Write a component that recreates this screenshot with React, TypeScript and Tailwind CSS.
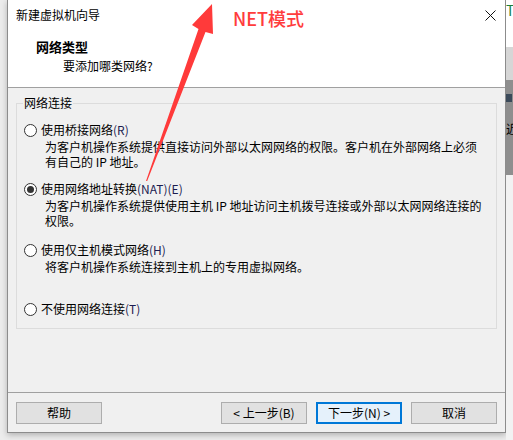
import React from "react";

const font = { fontFamily: '"Noto Sans CJK SC", "Microsoft YaHei", sans-serif' };

interface Option {
  label: string;
  hotkey: string;
  desc: string[];
  checked?: boolean;
  mt: string;
}

const options: Option[] = [
  {
    label: "使用桥接网络",
    hotkey: "(R)",
    desc: [
      "为客户机操作系统提供直接访问外部以太网网络的权限。客户机在外部网络上必须",
      "有自己的 IP 地址。",
    ],
    mt: "mt-[11px]",
  },
  {
    label: "使用网络地址转换",
    hotkey: "(NAT)(E)",
    desc: [
      "为客户机操作系统提供使用主机 IP 地址访问主机拨号连接或外部以太网网络连接的",
      "权限。",
    ],
    checked: true,
    mt: "mt-[12px]",
  },
  {
    label: "使用仅主机模式网络",
    hotkey: "(H)",
    desc: ["将客户机操作系统连接到主机上的专用虚拟网络。"],
    mt: "mt-[14px]",
  },
  {
    label: "不使用网络连接",
    hotkey: "(T)",
    desc: [],
    mt: "mt-[27px]",
  },
];

const Radio = ({ checked }: { checked?: boolean }) => (
  <span className="w-[13px] h-[13px] rounded-full border border-[#333333] bg-white flex items-center justify-center shrink-0">
    {checked && <span className="w-[7px] h-[7px] rounded-full bg-[#333333]" />}
  </span>
);

const Button = ({ children, primary }: { children: React.ReactNode; primary?: boolean }) => (
  <button
    className={
      primary
        ? "w-[86px] h-[22px] bg-[#e5f1fb] border-2 border-[#0078d7] text-[12px] leading-[16px] text-black"
        : "w-[86px] h-[22px] bg-[#e1e1e1] border border-[#adadad] text-[12px] leading-[16px] text-black"
    }
  >
    {children}
  </button>
);

export default function App() {
  return (
    <div className="relative w-[513px] h-[440px] overflow-hidden bg-[#ececec] flex" style={font}>
      <div className="w-[7px] shrink-0" />

      <div className="w-[499px] h-[433px] shrink-0 flex flex-col border-l border-r border-b border-[#8c8c8c] bg-[#f0f0f0] shadow-[0_2px_6px_rgba(0,0,0,0.25)]">
        {/* header */}
        <div className="h-[88px] bg-white border-b border-[#a0a0a0] flex flex-col">
          <div className="flex items-center justify-between pl-[8px] pr-[9px] pt-[7px] h-[23px]">
            <span className="text-[12px] leading-[16px] text-black">新建虚拟机向导</span>
            <svg width="11" height="11" viewBox="0 0 11 11">
              <path d="M0.5 0.5 L10.5 10.5 M10.5 0.5 L0.5 10.5" stroke="#111" strokeWidth="1" />
            </svg>
          </div>
          <div className="pl-[28px] mt-[16px] text-[13px] leading-[16px] font-bold text-black">网络类型</div>
          <div className="pl-[55px] mt-[3px] text-[12px] leading-[16px] text-black">要添加哪类网络?</div>
        </div>

        {/* body */}
        <div className="h-[304px] px-[8px]">
          <fieldset className="mt-[7px] border border-[#dcdcdc] pb-[11px]">
            <legend className="ml-[6px] px-[1px] text-[12px] leading-[16px] text-black">网络连接</legend>
            {options.map((o) => (
              <div key={o.label} className={o.mt}>
                <div className="flex items-center h-[16px] pl-[7px]">
                  <Radio checked={o.checked} />
                  <span className="ml-[4px] text-[12px] leading-[16px] text-black">
                    {o.label}
                    <span className="text-[#1c1c50]">{o.hotkey}</span>
                  </span>
                </div>
                {o.desc.length > 0 && (
                  <div className="mt-[1px] pl-[28px] text-[12px] leading-[15px] text-black">
                    {o.desc.map((d) => (
                      <div key={d}>{d}</div>
                    ))}
                  </div>
                )}
              </div>
            ))}
          </fieldset>
        </div>

        {/* footer */}
        <div className="h-[40px] border-t border-[#a0a0a0] pt-[9px] px-[8px] flex justify-between">
          <Button>帮助</Button>
          <div className="flex gap-[9px]">
            <Button>&lt; 上一步(B)</Button>
            <Button primary>下一步(N) &gt;</Button>
            <Button>取消</Button>
          </div>
        </div>
      </div>

      {/* window behind, on the right */}
      <div className="w-[7px] shrink-0 flex flex-col">
        <div className="h-[47px] bg-white text-[14px] leading-[20px] text-[#1a7f3c] overflow-hidden">T</div>
        <div className="h-[33px] bg-[#d6d6d6]" />
        <div className="h-[95px] bg-[#8e8e8e] flex flex-col items-start pt-[14px]">
          <div className="w-[6px] h-[8px] bg-[#3b4a5a]" />
          <div className="mt-[20px] w-[7px] text-[12px] leading-[14px] text-black overflow-hidden">近</div>
        </div>
        <div className="flex-1 bg-[#f2f2f2]" />
      </div>

      {/* annotation */}
      <div className="absolute left-[233px] top-[6px] text-[18px] leading-[24px] font-medium text-[#ff3c3c]">NET模式</div>
      <svg className="absolute left-0 top-0 pointer-events-none" width="513" height="440">
        <polygon points="146,181 198.5,29 192,25 212,4 213,34 205.5,32 147.2,181" fill="#ff3a3a" />
      </svg>
    </div>
  );
}
